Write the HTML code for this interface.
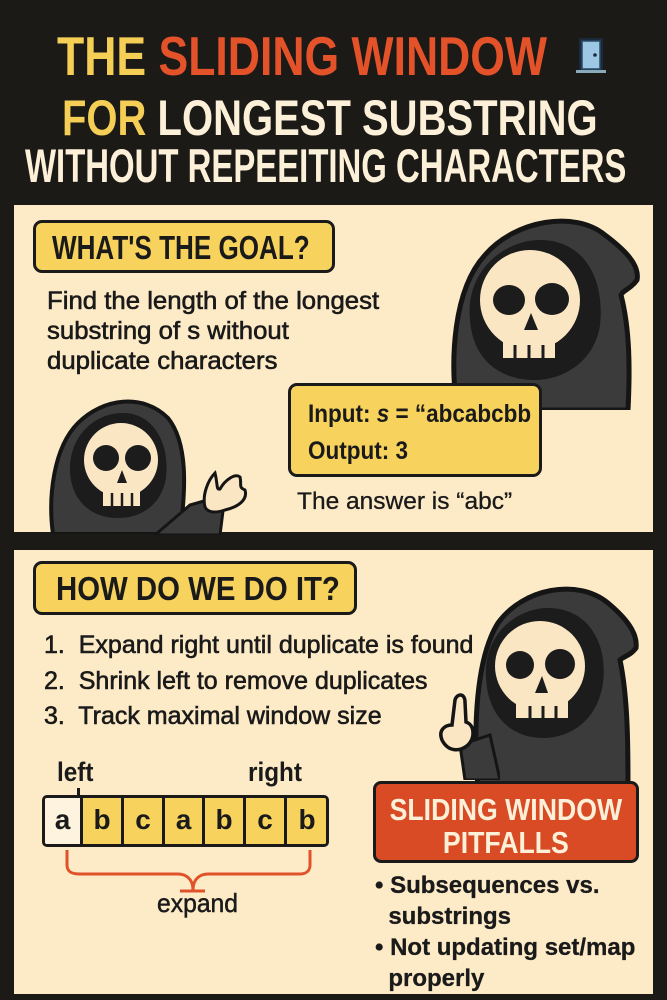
<!DOCTYPE html>
<html><head><meta charset="utf-8"><style>
*{margin:0;padding:0;box-sizing:border-box}
body{width:667px;height:1000px;background:#1c1a17;position:relative;overflow:hidden;font-family:"Liberation Sans",sans-serif;font-weight:bold;color:#1a1a1a}
.a{position:absolute;white-space:nowrap;display:inline-block;transform-origin:0 0}
.t{font-weight:bold;line-height:1}
.panel{position:absolute;left:14px;width:639px;background:#fdebc8}
.box{position:absolute;background:#f7d25c;border:3px solid #1a1a1a;border-radius:9px}
svg{position:absolute}
.cell{position:absolute;top:0;width:38px;height:46px;border-right:3px solid #1a1a1a;font-size:28px;text-align:center;line-height:44px;background:#f7d25c}
</style></head><body>
<div class="a t" style="left:57px;top:29px;font-size:55px;color:#f5cf55;transform:scaleX(0.81)">THE <span style="color:#e4522a">SLIDING WINDOW</span></div>
<svg style="left:575px;top:37px" width="34" height="37" viewBox="0 0 34 37"><rect x="4" y="1" width="24" height="33" fill="#1a2a3a"/><rect x="7" y="4" width="18" height="28" fill="#9cc8e6" stroke="#2a4a66" stroke-width="1.5"/><circle cx="20" cy="18" r="1.8" fill="#1a2a3a"/><rect x="1" y="33" width="30" height="3" fill="#8ab"/></svg>
<div class="a t" style="left:62px;top:93px;font-size:50px;color:#f5cf55;transform:scaleX(0.8)">FOR <span style="color:#fdf0d8">LONGEST SUBSTRING</span></div>
<div class="a t" style="left:25px;top:142px;font-size:47px;color:#fdf0d8;transform:scaleX(0.70)">WITHOUT REPEEITING CHARACTERS</div>

<div class="panel" style="top:205px;height:327px"></div>
<div class="panel" style="top:550px;height:444px"></div>

<!-- top reaper -->
<svg style="left:445px;top:210px" width="200" height="200" viewBox="0 0 200 200">
<path d="M12,200 C5,150 8,80 40,45 C70,10 130,0 160,25 C180,40 195,55 192,70 C185,80 178,80 176,85 C185,120 185,160 183,200 Z" fill="#3b3b3b" stroke="#151515" stroke-width="5"/>
<path d="M25,110 C20,60 60,30 95,30 C140,30 160,70 155,115 C150,150 120,170 90,170 C55,170 28,150 25,110 Z" fill="#1c1c1c"/>
<circle cx="85" cy="90" r="50" fill="#fbe6c4"/>
<path d="M58,115 H110 V148 H58 Z" fill="#fbe6c4"/>
<ellipse cx="64" cy="90" rx="16" ry="15" fill="#1c1c1c"/><ellipse cx="107" cy="89" rx="17" ry="16" fill="#1c1c1c"/>
<path d="M86,103 L79,120 H93 Z" fill="#1c1c1c"/>
<path d="M70,135 V150 M84,135 V152 M98,135 V150" stroke="#1c1c1c" stroke-width="3"/>
</svg>
<!-- small reaper -->
<svg style="left:48px;top:388px" width="150" height="146" viewBox="0 0 150 146">
<path d="M5,146 C0,110 5,60 30,35 C55,10 95,5 120,30 C140,55 138,100 132,146 Z" fill="#3b3b3b" stroke="#151515" stroke-width="4"/>
<path d="M22,85 C20,50 45,25 75,25 C105,25 122,55 118,90 C114,115 95,130 70,130 C42,130 24,112 22,85 Z" fill="#1c1c1c"/>
<circle cx="73" cy="72" r="37" fill="#fbe6c4"/>
<path d="M55,90 H92 V118 H55 Z" fill="#fbe6c4"/>
<ellipse cx="58" cy="70" rx="13" ry="13" fill="#1c1c1c"/><ellipse cx="90" cy="70" rx="13" ry="13" fill="#1c1c1c"/>
<path d="M74,82 L69,95 H79 Z" fill="#1c1c1c"/>
<path d="M64,105 V118 M74,105 V120 M84,105 V118" stroke="#1c1c1c" stroke-width="2.5"/>
</svg>
<svg style="left:150px;top:465px" width="100" height="70" viewBox="0 0 100 70">
<path d="M5,70 L40,40 L75,30 L70,70 Z" fill="#3b3b3b" stroke="#151515" stroke-width="3"/>
<path d="M55,42 C52,30 58,15 65,8 C68,20 66,25 70,24 C75,15 85,8 90,12 C92,20 88,22 95,25 C98,35 88,42 75,45 C66,48 58,48 55,42 Z" fill="#fbe6c4" stroke="#151515" stroke-width="3"/>
</svg>

<div class="box" style="left:33px;top:220px;width:302px;height:53px"></div>
<div class="a t" style="left:52px;top:231px;font-size:33px;transform:scaleX(0.79)">WHAT'S THE GOAL?</div>
<div class="a" style="left:47px;top:286px;font-size:25px;line-height:30px;font-weight:normal;-webkit-text-stroke:0.6px #1a1a1a;transform:scaleX(1.03)">Find the length of the longest<br>substring of s without<br>duplicate characters</div>

<div class="box" style="left:288px;top:383px;width:254px;height:94px"></div>
<div class="a" style="left:308px;top:396px;font-size:25px;line-height:37px;transform:scaleX(0.9)">Input: <i style="font-weight:bold">s</i> = “abcabcbb<br>Output: 3</div>
<div class="a" style="left:297px;top:488px;font-size:24.5px;-webkit-text-stroke:0.3px #1a1a1a;font-weight:normal">The answer is “abc”</div>

<div class="box" style="left:33px;top:561px;width:324px;height:54px"></div>
<div class="a t" style="left:56px;top:572px;font-size:33px;transform:scaleX(0.89)">HOW DO WE DO IT?</div>
<div class="a" style="left:44px;top:628px;font-size:25px;line-height:35.5px;font-weight:normal;-webkit-text-stroke:0.6px #1a1a1a">1.&nbsp; Expand right until duplicate is found<br>2.&nbsp; Shrink left to remove duplicates<br>3.&nbsp; Track maximal window size</div>

<!-- right reaper -->
<svg style="left:468px;top:578px" width="175" height="210" viewBox="0 0 175 210">
<path d="M10,210 C5,150 8,80 30,45 C55,10 110,0 140,25 C158,40 170,55 168,70 C162,78 156,78 152,82 C160,120 160,170 160,210 Z" fill="#3b3b3b" stroke="#151515" stroke-width="5"/>
<path d="M18,100 C15,55 50,30 80,30 C120,30 140,65 135,105 C130,140 105,160 75,160 C45,160 20,140 18,100 Z" fill="#1c1c1c"/>
<circle cx="72" cy="88" r="45" fill="#fbe6c4"/>
<path d="M48,110 H100 V140 H48 Z" fill="#fbe6c4"/>
<ellipse cx="52" cy="87" rx="14" ry="14" fill="#1c1c1c"/><ellipse cx="92" cy="86" rx="15" ry="15" fill="#1c1c1c"/>
<path d="M74,98 L67,115 H80 Z" fill="#1c1c1c"/>
<path d="M62,128 V142 M75,128 V144 M88,128 V142" stroke="#1c1c1c" stroke-width="3"/>
</svg>
<svg style="left:430px;top:690px" width="70" height="90" viewBox="0 0 70 90">
<path d="M35,90 L30,55 L60,45 L70,90 Z" fill="#3b3b3b" stroke="#151515" stroke-width="3"/>
<path d="M12,50 C8,40 15,35 22,35 L25,10 C27,3 35,3 35,12 L36,32 C45,35 45,48 38,55 C30,62 18,62 12,50 Z" fill="#fbe6c4" stroke="#151515" stroke-width="3.5"/>
</svg>

<div class="a" style="left:57px;top:757px;font-size:27px;transform:scaleX(0.9)">left</div>
<div class="a" style="left:248px;top:757px;font-size:27px;transform:scaleX(0.9)">right</div>
<div class="a" style="left:77px;top:788px;width:3px;height:9px;background:#1a1a1a"></div>
<div class="a" style="left:42px;top:795px;width:287px;height:52px;border:3px solid #1a1a1a;border-radius:5px;overflow:hidden;background:#f7d25c">
<div class="cell" style="left:0;background:#fdf3de;width:38px">a</div>
<div class="cell" style="left:38px;width:41px">b</div>
<div class="cell" style="left:79px;width:41px">c</div>
<div class="cell" style="left:120px;width:40px">a</div>
<div class="cell" style="left:160px;width:41px">b</div>
<div class="cell" style="left:201px;width:41px">c</div>
<div class="cell" style="left:242px;width:40px;border-right:none">b</div>
</div>
<svg style="left:60px;top:850px" width="260" height="45" viewBox="0 0 260 45"><path d="M7,0 V15 C7,22 12,24 20,24 H118 C125,24 133,28 133,40 C133,28 141,24 148,24 H240 C247,24 250,20 250,15 V0" fill="none" stroke="#e0532a" stroke-width="3"/><path d="M120,41 H145" stroke="#e0532a" stroke-width="3"/></svg>
<div class="a" style="left:157px;top:888px;font-size:26px;font-weight:normal;-webkit-text-stroke:0.5px #1a1a1a;transform:scaleX(0.95)">expand</div>

<div class="a" style="left:373px;top:781px;width:266px;height:82px;background:#d84b25;border:3px solid #1a1a1a;border-radius:8px"></div>
<div class="a t" style="left:373px;top:793px;width:309px;font-size:31px;line-height:33px;color:#fdf0d8;text-align:center;transform:scaleX(0.86)">SLIDING WINDOW<br>PITFALLS</div>
<div class="a" style="left:375px;top:870px;font-size:24px;line-height:31px;-webkit-text-stroke:0.3px #1a1a1a">• Subsequences vs.<br>&nbsp;&nbsp;substrings<br>• Not updating set/map<br>&nbsp;&nbsp;properly</div>
</body></html>
